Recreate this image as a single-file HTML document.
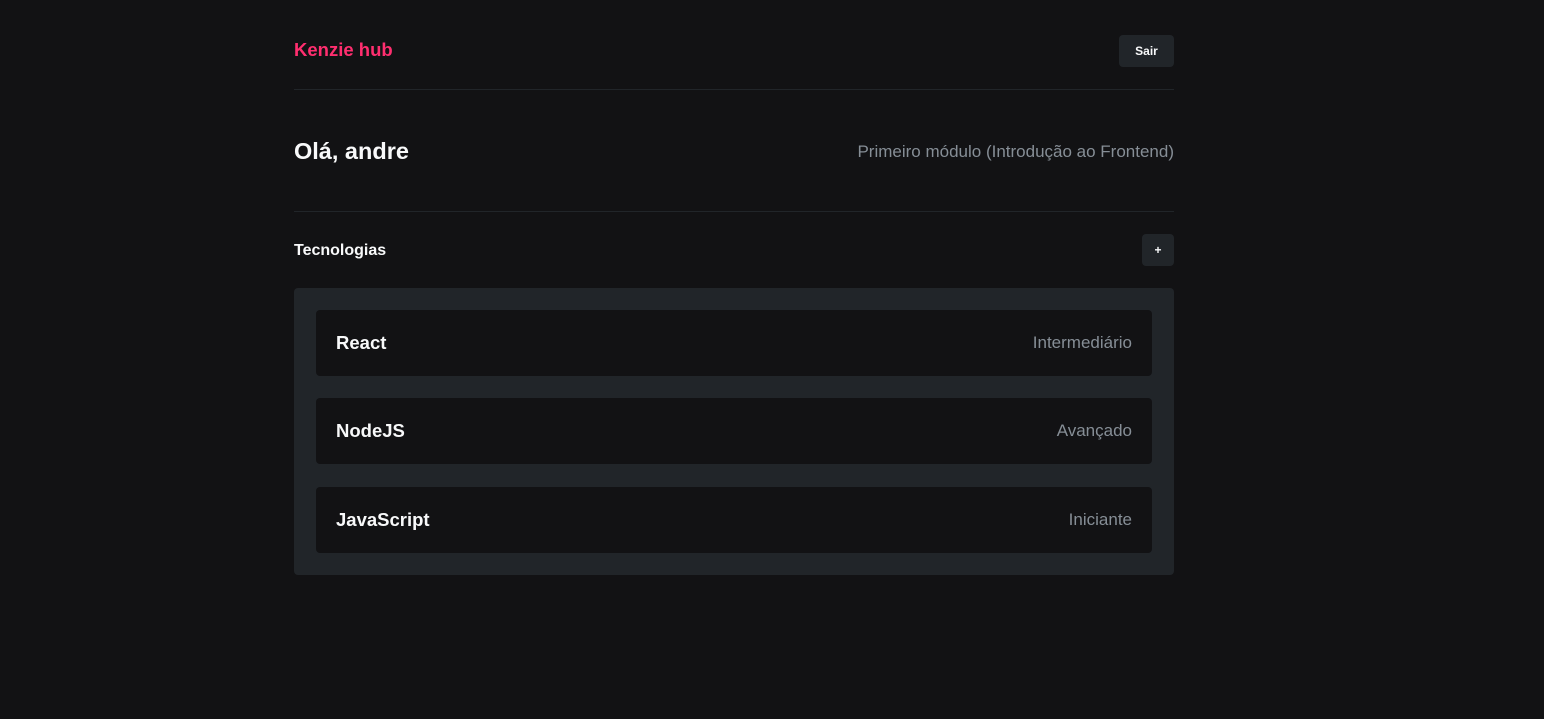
<!DOCTYPE html>
<html><head><meta charset="utf-8"><style>
*{margin:0;padding:0;box-sizing:border-box}
body{width:1544px;height:719px;background:#121214;font-family:"Liberation Sans",sans-serif;color:#f8f9fa;position:relative;overflow:hidden}
.a{position:absolute}
.logo{left:294px;top:39px;color:#ff2e6f;font-weight:bold;font-size:18.5px;line-height:22px}
.btn{background:#212529;border-radius:4px;color:#f8f9fa;font-weight:bold;font-size:12px;display:flex;align-items:center;justify-content:center}
.line{left:294px;width:880px;height:1px;background:#212529}
.box{left:294px;top:288px;width:880px;height:287px;background:#212529;border-radius:4px}
.item{left:316px;width:836px;height:66px;background:#121214;border-radius:4px;display:flex;align-items:center;justify-content:space-between;padding:0 20px}
.item b{font-size:18.5px;line-height:22px}
.item span{color:#868e96;font-size:17px;line-height:22px}
</style></head><body>
<div class="a logo">Kenzie hub</div>
<div class="a btn" style="left:1119px;top:35px;width:55px;height:32px">Sair</div>
<div class="a line" style="top:89px"></div>
<div class="a" style="left:294px;top:137px;font-size:23.5px;font-weight:bold;line-height:28px">Olá, andre</div>
<div class="a" style="right:370px;top:142px;font-size:17px;color:#868e96;line-height:20px">Primeiro módulo (Introdução ao Frontend)</div>
<div class="a line" style="top:211px"></div>
<div class="a" style="left:294px;top:241px;font-size:16px;font-weight:bold;line-height:20px">Tecnologias</div>
<div class="a btn" style="left:1142px;top:234px;width:32px;height:32px">+</div>
<div class="a box"></div>
<div class="a item" style="top:310px"><b>React</b><span>Intermediário</span></div>
<div class="a item" style="top:398px"><b>NodeJS</b><span>Avançado</span></div>
<div class="a item" style="top:487px"><b>JavaScript</b><span>Iniciante</span></div>
</body></html>
